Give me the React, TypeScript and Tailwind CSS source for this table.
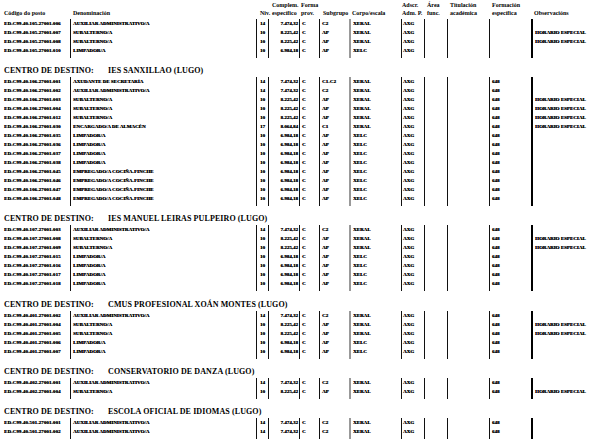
import React from "react";

type Row = {
  code: string;
  den: string;
  niv: string;
  comp: string;
  forma: string;
  sub: string;
  corpo: string;
  ads: string;
  form: string;
  obs: string;
};

const mk = (
  code: string,
  den: string,
  niv: string,
  comp: string,
  sub: string,
  corpo: string,
  form: string,
  obs: string
): Row => ({ code, den, niv, comp, forma: "C", sub, corpo, ads: "AXG", form, obs });

const AUX = "AUXILIAR ADMINISTRATIVO/A";
const SUB = "SUBALTERNO/A";
const LIM = "LIMPADOR/A";
const EMP = "EMPREGADO/A COCIÑA-FINCHE";
const HE = "HORARIO ESPECIAL";

const sections: { title?: string; rows: Row[] }[] = [
  {
    rows: [
      mk("ED.C99.40.105.27001.006", AUX, "14", "7.474,32", "C2", "XERAL", "", ""),
      mk("ED.C99.40.105.27001.007", SUB, "10", "8.225,42", "AP", "XERAL", "", HE),
      mk("ED.C99.40.105.27001.008", SUB, "10", "8.225,42", "AP", "XERAL", "", HE),
      mk("ED.C99.40.105.27001.010", LIM, "10", "6.984,18", "AP", "XELC", "", ""),
    ],
  },
  {
    title: "IES SANXILLAO (LUGO)",
    rows: [
      mk("ED.C99.40.106.27001.001", "AXUDANTE DE SECRETARÍA", "14", "7.474,32", "C1-C2", "XERAL", "648", ""),
      mk("ED.C99.40.106.27001.002", AUX, "14", "7.474,32", "C2", "XERAL", "648", ""),
      mk("ED.C99.40.106.27001.003", SUB, "10", "8.225,42", "AP", "XERAL", "648", HE),
      mk("ED.C99.40.106.27001.004", SUB, "10", "8.225,42", "AP", "XERAL", "648", HE),
      mk("ED.C99.40.106.27001.012", SUB, "10", "8.225,42", "AP", "XERAL", "648", HE),
      mk("ED.C99.40.106.27001.030", "ENCARGADO/A DE ALMACÉN", "17", "8.064,84", "C1", "XERAL", "648", HE),
      mk("ED.C99.40.106.27001.035", LIM, "10", "6.984,18", "AP", "XELC", "648", ""),
      mk("ED.C99.40.106.27001.036", LIM, "10", "6.984,18", "AP", "XELC", "648", ""),
      mk("ED.C99.40.106.27001.037", LIM, "10", "6.984,18", "AP", "XELC", "648", ""),
      mk("ED.C99.40.106.27001.038", LIM, "10", "6.984,18", "AP", "XELC", "648", ""),
      mk("ED.C99.40.106.27001.045", EMP, "10", "6.984,18", "AP", "XELC", "648", ""),
      mk("ED.C99.40.106.27001.046", EMP, "10", "6.984,18", "AP", "XELC", "648", ""),
      mk("ED.C99.40.106.27001.047", EMP, "10", "6.984,18", "AP", "XELC", "648", ""),
      mk("ED.C99.40.106.27001.048", EMP, "10", "6.984,18", "AP", "XELC", "648", ""),
    ],
  },
  {
    title: "IES MANUEL LEIRAS PULPEIRO (LUGO)",
    rows: [
      mk("ED.C99.40.107.27001.003", AUX, "14", "7.474,32", "C2", "XERAL", "648", ""),
      mk("ED.C99.40.107.27001.008", SUB, "10", "8.225,42", "AP", "XERAL", "648", HE),
      mk("ED.C99.40.107.27001.009", SUB, "10", "8.225,42", "AP", "XERAL", "648", HE),
      mk("ED.C99.40.107.27001.015", LIM, "10", "6.984,18", "AP", "XELC", "648", ""),
      mk("ED.C99.40.107.27001.016", LIM, "10", "6.984,18", "AP", "XELC", "648", ""),
      mk("ED.C99.40.107.27001.017", LIM, "10", "6.984,18", "AP", "XELC", "648", ""),
      mk("ED.C99.40.107.27001.018", LIM, "10", "6.984,18", "AP", "XELC", "648", ""),
    ],
  },
  {
    title: "CMUS PROFESIONAL XOÁN MONTES (LUGO)",
    rows: [
      mk("ED.C99.40.401.27001.002", AUX, "14", "7.474,32", "C2", "XERAL", "648", ""),
      mk("ED.C99.40.401.27001.004", SUB, "10", "8.225,42", "AP", "XERAL", "648", HE),
      mk("ED.C99.40.401.27001.005", SUB, "10", "8.225,42", "AP", "XERAL", "648", HE),
      mk("ED.C99.40.401.27001.006", LIM, "10", "6.984,18", "AP", "XELC", "648", ""),
      mk("ED.C99.40.401.27001.007", LIM, "10", "6.984,18", "AP", "XELC", "648", ""),
    ],
  },
  {
    title: "CONSERVATORIO DE DANZA (LUGO)",
    rows: [
      mk("ED.C99.40.402.27001.001", AUX, "14", "7.474,32", "C2", "XERAL", "648", ""),
      mk("ED.C99.40.402.27001.004", SUB, "10", "8.225,42", "AP", "XERAL", "648", HE),
    ],
  },
  {
    title: "ESCOLA OFICIAL DE IDIOMAS (LUGO)",
    rows: [
      mk("ED.C99.40.501.27001.001", AUX, "14", "7.474,32", "C2", "XERAL", "648", ""),
      mk("ED.C99.40.501.27001.002", AUX, "14", "7.474,32", "C2", "XERAL", "648", ""),
    ],
  },
];

function Col({ className, items }: { className: string; items: string[] }) {
  return (
    <div className={`flex flex-col pb-[3px] ${className}`}>
      {items.map((t, i) => (
        <div key={i} className="h-[9px] whitespace-nowrap overflow-visible">
          {t || "\u00a0"}
        </div>
      ))}
    </div>
  );
}

function Body({ rows }: { rows: Row[] }) {
  return (
    <div className="flex pl-[4px] text-[5px] leading-[9px] [text-shadow:0.3px_0_0_#000]">
      <Col className="w-[66px] tracking-[0.1px]" items={rows.map((r) => r.code)} />
      <Col className="w-[186px] border-l border-[#111] pl-[2px]" items={rows.map((r) => r.den)} />
      <Col className="w-[12px] border-l border-[#111] text-center" items={rows.map((r) => r.niv)} />
      <Col className="w-[31px] border-l border-[#111] text-right pr-[1px]" items={rows.map((r) => r.comp)} />
      <Col className="w-[20px] border-l border-[#111] pl-[2px]" items={rows.map((r) => r.forma)} />
      <Col className="w-[30px] border-l border-[#111] pl-[2px]" items={rows.map((r) => r.sub)} />
      <Col className="w-[52px] border-l-2 border-[#999] pl-[2px]" items={rows.map((r) => r.corpo)} />
      <Col className="w-[23px] border-l border-[#111] pl-[1px]" items={rows.map((r) => r.ads)} />
      <Col className="w-[23px] border-l border-[#111]" items={rows.map(() => "")} />
      <Col className="w-[42px] border-l border-[#111]" items={rows.map(() => "")} />
      <Col className="w-[42px] border-l border-[#111] pl-[2px]" items={rows.map((r) => r.form)} />
      <Col className="w-[80px] border-l-2 border-black pl-[2px]" items={rows.map((r) => r.obs)} />
    </div>
  );
}

function Header() {
  return (
    <div className="flex h-[19px] pl-[4px] pt-[1px] text-[6px] leading-[8px]">
      <div className="w-[66px] flex flex-col"><span>&nbsp;</span><span>Código do posto</span></div>
      <div className="w-[186px] flex flex-col pl-[3px]"><span>&nbsp;</span><span>Denominación</span></div>
      <div className="w-[12px] flex flex-col pl-[4px] whitespace-nowrap"><span>&nbsp;</span><span>Niv.</span></div>
      <div className="w-[31px] flex flex-col pl-[4px] whitespace-nowrap"><span>Complem.</span><span>específico</span></div>
      <div className="w-[20px] flex flex-col pl-[2px]"><span>Forma</span><span>prov.</span></div>
      <div className="w-[30px] flex flex-col pl-[4px]"><span>&nbsp;</span><span>Subgrupo</span></div>
      <div className="w-[52px] flex flex-col pl-[3px]"><span>&nbsp;</span><span>Corpo/escala</span></div>
      <div className="w-[23px] flex flex-col pl-[1px] whitespace-nowrap"><span>Adscr.</span><span>Adm. P.</span></div>
      <div className="w-[23px] flex flex-col pl-[3px]"><span>Área</span><span>func.</span></div>
      <div className="w-[42px] flex flex-col pl-[3px]"><span>Titulación</span><span>académica</span></div>
      <div className="w-[42px] flex flex-col pl-[3px]"><span>Formación</span><span>específica</span></div>
      <div className="w-[80px] flex flex-col pl-[3px]"><span>&nbsp;</span><span>Observacións</span></div>
    </div>
  );
}

export default function App() {
  return (
    <div
      className="w-[616px] h-[439px] overflow-hidden bg-white text-black font-bold"
      style={{ fontFamily: '"Liberation Serif", "Times New Roman", serif' }}
    >
      <Header />
      {sections.map((s, i) => (
        <div key={i}>
          {s.title && (
            <div className="mt-[8.2px] mb-[1px] h-[10px] pl-[4px] text-[8px] leading-[10px] tracking-[0.1px] whitespace-nowrap flex">
              <span className="w-[104px]">CENTRO DE DESTINO:</span>
              <span>{s.title}</span>
            </div>
          )}
          <Body rows={s.rows} />
        </div>
      ))}
    </div>
  );
}
